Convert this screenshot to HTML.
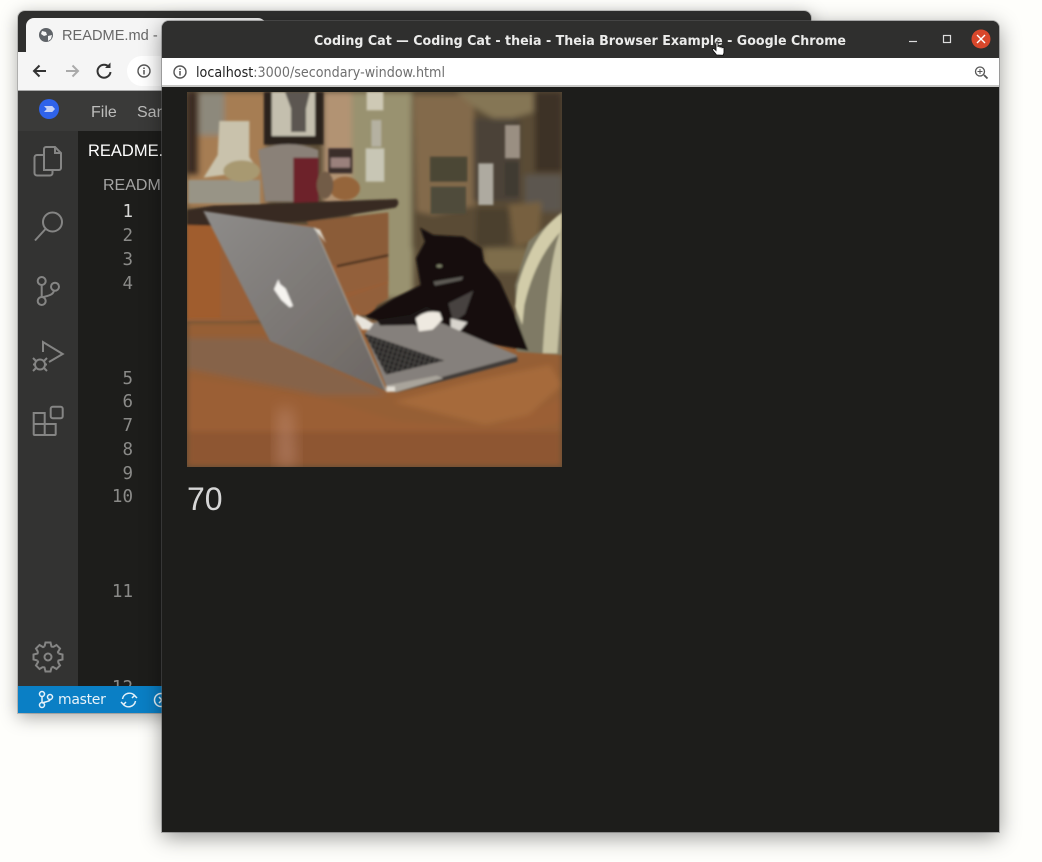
<!DOCTYPE html>
<html><head><meta charset="utf-8"><title>Coding Cat</title>
<style>
html,body{margin:0;padding:0;width:1042px;height:862px;overflow:hidden;background:#fefefb;font-family:"Liberation Sans",sans-serif}
.a{position:absolute}
svg{position:absolute;overflow:visible}
.ln{position:absolute;width:24px;text-align:right;left:109px;font:17.5px/24px "DejaVu Sans Mono","Liberation Mono",monospace;color:#8a8a88}
</style></head><body>

<!-- back window -->
<div class="a" style="left:18px;top:11px;width:793px;height:702px;background:#2f2f2e;border-radius:7px 7px 0 0;box-shadow:0 4px 18px rgba(0,0,0,.35),0 0 0 1px rgba(130,130,130,.35)"></div>
<div class="a" style="left:26px;top:18px;width:240px;height:36px;background:#f5f5f5;border-radius:8px 8px 0 0"></div>
<div class="a" style="left:18px;top:52px;width:250px;height:39px;background:#f5f5f5"></div>
<div class="a" style="left:18px;top:90px;width:144px;height:1px;background:#aaa"></div>
<div class="a" style="left:127px;top:56px;width:40px;height:30px;background:#fff;border-radius:15px 0 0 15px"></div>
<svg style="left:0;top:0" width="170" height="100" fill="none">
<circle cx="46" cy="35" r="7" fill="#5f6368"/>
<path d="M42 31l4 1 1 3-3 1-3-2zM48 36l4-1-1 4-3 2z" fill="#f5f5f5"/>
<path d="M46 71H34M39.500 65.500L34 71l5.500 5.500" stroke="#333" stroke-width="2"/>
<path d="M78 71H66M72.500 65.500L78 71l-5.500 5.500" stroke="#aaa" stroke-width="2"/>
<path d="M109 67a6.500 6.500 0 1 0 1.500 5" stroke="#333" stroke-width="2"/>
<path d="M105 68h5.500v-5.500z" fill="#333"/>
<circle cx="144" cy="71" r="6" stroke="#555" stroke-width="1.400"/>
<path d="M144 70v4.500M144 67.500v1.500" stroke="#555" stroke-width="1.500"/>
</svg>
<div class="a" style="left:62px;top:27px;font-size:14.600px;line-height:18px;color:#676767;white-space:nowrap;width:100px;overflow:hidden">README.md - t</div>

<div class="a" style="left:18px;top:91px;width:144px;height:40px;background:#3a3a39"></div>
<div class="a" style="left:18px;top:131px;width:60px;height:555px;background:#333332"></div>
<div class="a" style="left:78px;top:131px;width:84px;height:555px;background:#1d1d1b"></div>
<div class="a" style="left:18px;top:686px;width:144px;height:27px;background:#0a7fc5"></div>
<div class="a" style="left:39px;top:99px;width:20px;height:20px;border-radius:50%;background:#2f63ea"></div>
<div class="a" style="left:44px;top:106px;width:11px;height:6px;background:#c3d0f6;clip-path:polygon(0 0,75% 0,100% 50%,75% 100%,0 100%,25% 50%)"></div>
<div class="a" style="left:91px;top:103px;font-size:16px;line-height:20px;color:#bdbdbc">File</div>
<div class="a" style="left:137px;top:103px;font-size:16px;line-height:20px;color:#bdbdbc;width:25px;overflow:hidden">San</div>
<div class="a" style="left:88px;top:141px;font-size:16.500px;line-height:20px;color:#fff;width:74px;overflow:hidden">README.</div>
<div class="a" style="left:103px;top:176px;font-size:16px;line-height:20px;color:#a5a5a4;width:59px;overflow:hidden">READM</div>

<div class="ln" style="top:200px;color:#d8d8d6">1</div>
<div class="ln" style="top:224px">2</div>
<div class="ln" style="top:248px">3</div>
<div class="ln" style="top:272px">4</div>
<div class="ln" style="top:367px">5</div>
<div class="ln" style="top:390px">6</div>
<div class="ln" style="top:414px">7</div>
<div class="ln" style="top:438px">8</div>
<div class="ln" style="top:462px">9</div>
<div class="ln" style="top:485px">10</div>
<div class="ln" style="top:580px">11</div>
<div class="a" style="left:78px;top:672px;width:84px;height:14px;overflow:hidden"><div class="ln" style="left:31px;top:4px">12</div></div>

<svg style="left:0;top:0" width="170" height="720" fill="none" stroke="#858584" stroke-width="2">
<path d="M44 170V149a2 2 0 0 1 2-2h9l6 6v15a2 2 0 0 1-2 2zM55 147v6h6"/>
<path d="M44 155H37a2.500 2.500 0 0 0-2.500 2.500V173a2.500 2.500 0 0 0 2.500 2.500h13a2.500 2.500 0 0 0 2.500-2.500v-3"/>
<circle cx="52.500" cy="222" r="9.500"/><path d="M45.500 229L35 240.500"/>
<circle cx="41.700" cy="281" r="4"/><circle cx="41.700" cy="301" r="4"/><circle cx="55" cy="286.700" r="4"/>
<path d="M41.700 285v12M54 290.700c-1 4-5 5-11.500 6.500"/>
<path d="M43 352V342L62.700 354L49 362"/>
<circle cx="40" cy="364.500" r="5"/><path d="M33 358l3 3M47 358l-3 3M33 364.500h2M45 364.500h2M33 371l3-3M47 371l-3-3"/>
<rect x="50.700" y="406.700" width="12" height="11.600" rx="2"/>
<path d="M33.700 413h11v11h11v10a1 1 0 0 1-1 1H34.700a1 1 0 0 1-1-1zM33.700 424h11v11"/>
<g transform="translate(48 657)">
<path d="M-3.500-10.500L-2.500-14.500H2.500L3.500-10.500L4.950-9.900"/>
<path transform="rotate(45)" d="M-3.500-10.500L-2.500-14.500H2.500L3.500-10.500L4.950-9.900"/>
<path transform="rotate(90)" d="M-3.500-10.500L-2.500-14.500H2.500L3.500-10.500L4.950-9.900"/>
<path transform="rotate(135)" d="M-3.500-10.500L-2.500-14.500H2.500L3.500-10.500L4.950-9.900"/>
<path transform="rotate(180)" d="M-3.500-10.500L-2.500-14.500H2.500L3.500-10.500L4.950-9.900"/>
<path transform="rotate(225)" d="M-3.500-10.500L-2.500-14.500H2.500L3.500-10.500L4.950-9.900"/>
<path transform="rotate(270)" d="M-3.500-10.500L-2.500-14.500H2.500L3.500-10.500L4.950-9.900"/>
<path transform="rotate(315)" d="M-3.500-10.500L-2.500-14.500H2.500L3.500-10.500L4.950-9.900"/>
<circle r="3.500"/>
</g>
<g stroke="#e8f3fa" stroke-width="1.500">
<circle cx="42" cy="694" r="2.500"/><circle cx="42" cy="705" r="2.500"/><circle cx="50" cy="697" r="2.500"/>
<path d="M42 696.500v6M50 699.500c0 2-4 2-8 3.500"/>
<path d="M122.500 699a7 7 0 0 1 12.500-3M135.500 701a7 7 0 0 1-12.500 3"/>
<path d="M137 698l-2.500-2.500-2.500 2.500M121 702l2.500 2.500 2.500-2.500"/>
<circle cx="161" cy="700" r="6.500"/><path d="M159 697l3 3-3 3"/>
</g>
</svg>
<div class="a" style="left:58px;top:691px;font:14px/18px 'DejaVu Sans',sans-serif;color:#e8f3fa;letter-spacing:-.3px">master</div>

<!-- front window -->
<div class="a" style="left:162px;top:21px;width:837px;height:811px;background:#1d1d1b;border-radius:7px 7px 0 0;box-shadow:0 5px 22px rgba(0,0,0,.42),0 0 0 1px rgba(120,120,120,.45)"></div>
<div class="a" style="left:162px;top:21px;width:837px;height:37px;background:#2f2f2e;border-radius:7px 7px 0 0"></div>
<div class="a" style="left:162px;top:58px;width:837px;height:27px;background:#fff"></div>
<div class="a" style="left:162px;top:85px;width:837px;height:2px;background:#c8c8c6"></div>
<svg style="left:0;top:0" width="1042" height="100">
<text x="314" y="45" textLength="532" lengthAdjust="spacingAndGlyphs" font-family="'DejaVu Sans',sans-serif" font-weight="700" font-size="13" fill="#ebebea">Coding Cat — Coding Cat - theia - Theia Browser Example - Google Chrome</text>
<text x="196" y="77" textLength="249" lengthAdjust="spacingAndGlyphs" font-family="'DejaVu Sans',sans-serif" font-size="14" fill="#6f6f6f"><tspan fill="#222">localhost</tspan>:3000/secondary-window.html</text>
<g fill="none">
<circle cx="180" cy="72" r="6" stroke="#555" stroke-width="1.400"/>
<path d="M180 71v4.500M180 68.500v1.500" stroke="#555" stroke-width="1.500"/>
<circle cx="980" cy="71.500" r="4.500" stroke="#555" stroke-width="1.300"/>
<path d="M984 75l3.500 3.500" stroke="#555" stroke-width="1.800"/>
<path d="M980 69v5M977.500 71.500h5" stroke="#555"/>
<path d="M909 41.500h8" stroke="#ddd" stroke-width="1.200"/>
<rect x="943.500" y="35.500" width="7" height="7" stroke="#ddd" stroke-width="1.200"/>
<circle cx="981" cy="39" r="9.500" fill="#d9472b"/>
<path d="M977 35l8 8M985 35l-8 8" stroke="#fff" stroke-width="1.400"/>
</g>
<path d="M716.500 55c-1-2-3.500-3.500-4-5.500-.2-1 1-1.400 2-.4l1.500 1.400V43c0-1.500 2-1.500 2 0v4c0-1.200 2-1.200 2 0v.6c0-1.200 2-1.200 2 0v.6c0-1.200 2-1.200 2 .2V52.500c0 1-.5 1.800-1 2.800z" fill="#fff" stroke="#111" stroke-width=".9"/>
</svg>

<!-- cat picture -->
<svg style="left:187px;top:92px;overflow:hidden" width="375" height="375" viewBox="21 21 1125 1125">
<defs>
<filter id="b" x="-10%" y="-10%" width="120%" height="120%"><feGaussianBlur stdDeviation="9"/></filter>
<filter id="c" x="-10%" y="-10%" width="120%" height="120%"><feGaussianBlur stdDeviation="3.500"/></filter>
<filter id="d" x="-30%" y="-30%" width="160%" height="160%"><feGaussianBlur stdDeviation="22"/></filter>
<linearGradient id="l" x1="0" y1="0" x2="1" y2="1"><stop offset="0" stop-color="#8e8c8a"/><stop offset="1" stop-color="#6c6662"/></linearGradient>
<pattern id="k" width="14" height="14" patternUnits="userSpaceOnUse" patternTransform="rotate(18)"><rect width="14" height="14" fill="#232120"/><rect x="0" y="0" width="3" height="14" fill="#57534f"/><rect x="0" y="0" width="14" height="3" fill="#4a4744"/></pattern>
</defs>
<rect x="21" y="21" width="1125" height="1125" fill="#5c4d37"/>
<g filter="url(#b)">
<rect x="21" y="21" width="240" height="350" fill="#a67d53"/>
<rect x="21" y="21" width="35" height="250" fill="#3a2b20"/>
<rect x="58" y="21" width="75" height="130" fill="#8d897c"/>
<rect x="430" y="21" width="90" height="340" fill="#b29373"/>
<rect x="515" y="21" width="185" height="620" fill="#99926f"/>
<rect x="695" y="21" width="451" height="470" fill="#5a4c36"/>
<path d="M700 30h180l10 330-130 30-50-10z" fill="#836b4c"/>
<path d="M830 21h230v60l-100 30-70-40z" fill="#857655"/>
<rect x="1065" y="21" width="81" height="240" fill="#3c3025"/>
<rect x="1035" y="270" width="111" height="110" fill="#5c5750"/>
<path d="M890 370h100l-5 110-100 10z" fill="#4c402f"/>
<rect x="880" y="100" width="140" height="250" fill="#4b4237"/>
<path d="M985 360l100-10-10 120-70 15z" fill="#77613f"/>
<path d="M910 490h140v70h-140z" fill="#7e6d4c"/>
</g>
<g filter="url(#c)">
<rect x="750" y="215" width="112" height="75" fill="#4b4636"/>
<rect x="752" y="305" width="106" height="82" fill="#504b3b"/>
<rect x="975" y="120" width="45" height="100" fill="#9a8f82"/>
<rect x="975" y="232" width="40" height="100" fill="#3f3b31"/>
<rect x="895" y="235" width="45" height="125" fill="#aeaaa0"/>
<rect x="557" y="190" width="56" height="100" fill="#c8c6b5"/>
<rect x="560" y="21" width="50" height="55" fill="#cec9b5"/>
<rect x="574" y="105" width="30" height="80" fill="#b5b1a1"/>
<rect x="252" y="21" width="178" height="158" fill="#2b241e"/>
<rect x="275" y="21" width="130" height="132" fill="#c4bfae"/>
<path d="M315 21h75l-12 50v70h-45V70z" fill="#5c5651"/>
<path d="M118 108h90v108l28 40-165 22 42-68z" fill="#c9c2ac"/>
<path d="M25 285h215v70H25z" fill="#989486"/>
<ellipse cx="185" cy="258" rx="55" ry="32" fill="#a89971"/>
<path d="M235 195q90-35 180 0v155H255z" fill="#8a8178"/>
<rect x="340" y="218" width="75" height="142" fill="#6d2029"/>
<rect x="445" y="190" width="72" height="75" fill="#3a2e2c"/>
<rect x="452" y="218" width="58" height="30" fill="#9a807c"/>
<ellipse cx="495" cy="310" rx="45" ry="35" fill="#95653a"/>
<ellipse cx="435" cy="300" rx="25" ry="40" fill="#725c46"/>
<path d="M21 420H420l205-30v210l-50 90-400 20H21z" fill="#985f38"/>
<path d="M380 410l245-28v130l-170 30z" fill="#8b5b38"/>
<path d="M470 548l155-35 1 75-150 40zM500 640l125-45v45l-80 50z" fill="#93603b"/>
<path d="M470 540l155-33v8l-155 33z" fill="#4f3622"/>
<path d="M21 420h100v280H21z" fill="#a05d2e"/>
<path d="M21 375L100 362 650 342Q662 355 646 368L380 410 90 422 21 420z" fill="#392c23"/>
</g>
<g filter="url(#b)">
<rect x="21" y="710" width="1125" height="436" fill="#965e36"/>
<path d="M21 760l230 0 80 30 290 140-200 0L21 850z" fill="#86634a"/>
<path d="M21 880l400 60 230 70 290 20 205-90v70l-205 50H21z" fill="#9b5e35"/>
<path d="M640 950l230-60 240-50 36 60-100 90-130 30z" fill="#a66a3a"/>
<path d="M21 1040h1125v106H21z" fill="#8e5730"/>
</g>
<path d="M295 970h40l15 176h-60z" fill="#c4927c" opacity=".5" filter="url(#d)"/>
<g filter="url(#c)">
<path d="M1010 800l-5-200 40-130 101-90v430z" fill="#7f7a65"/>
<path d="M1146 384q-85 55-132 215l-9 66 22 55 6-60q32-140 113-225z" fill="#d2cca9"/>
<path d="M1146 425q-42 100-58 380h44l14-190z" fill="#c5c0a0"/>
<path d="M720 428L760 450 850 455 905 490 912 530 960 590 1000 680 1045 797 900 772 830 735 770 710 690 695 590 705 555 695 640 640 722 600 708 520 735 470z" fill="#14110e"/>
<path d="M805 655q40-20 75-38l-25 70-35 25z" fill="#474340"/>
<path d="M812 700l50 12-22 26-28-4z" fill="#d8d4cd"/>
<path d="M760 590l90-15-5 10-80 17z" fill="#5f5c56"/>
<ellipse cx="778" cy="543" rx="9" ry="5" fill="#7d7f66"/>
<path d="M70 378L405 428 618 918 270 768z" fill="url(#l)"/>
<path d="M405 428L618 918" stroke="#a8a49b" stroke-width="3" fill="none"/>
<path d="M400 428l20 6 18 40z" fill="#dcd8ce"/>
<path d="M555 745L580 712 700 702 780 712 1010 810 1012 825 625 920z" fill="#85807b"/>
<path d="M553 745L793 827 618 869z" fill="url(#k)"/>
<path d="M625 920L1012 815 1012 830 800 885 650 922z" fill="#3f3b38"/>
<path d="M618 902L770 872 790 880 650 921 618 920z" fill="#a9a49b"/>
<path d="M620 905l25 0 0 14-25 2z" fill="#e3dfd5"/>
<path d="M590 705L690 690 740 665 790 690 760 735 700 720 600 722z" fill="#1a1714"/>
<path d="M707 700q30-27 72-18l8 22-28 30-42 5z" fill="#eee9e0"/>
<path d="M528 688l28 12 24 16-12 18-22 0-20-32z" fill="#e8e4dc"/>
<path d="M295 583l5 14 17 14 22 52-10 4-25-22-22-32z" fill="#f5f3ef"/>
</g>
</svg>

<div class="a" style="left:187px;top:481px;font-size:32px;line-height:37px;color:#d6d6d6">70</div>
</body></html>
